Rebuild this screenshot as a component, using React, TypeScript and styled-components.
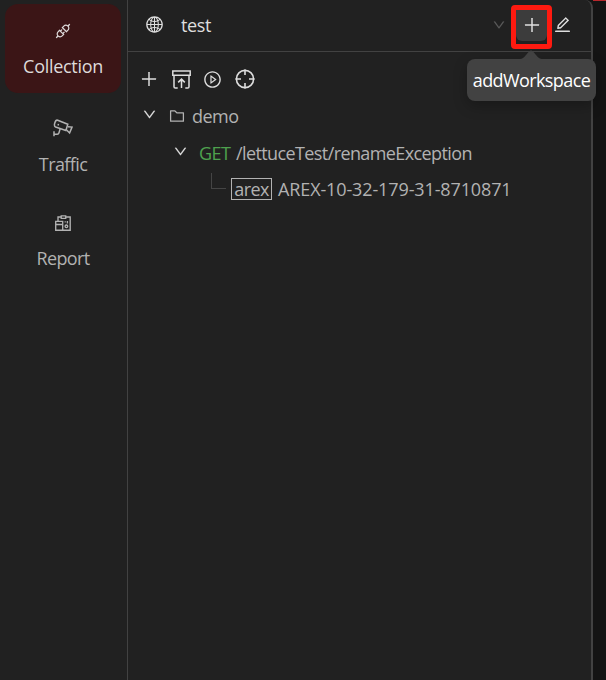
import React from 'react';
import styled, { createGlobalStyle } from 'styled-components';
import {
  AiOutlineApi,
  AiOutlineDown,
  AiOutlineEdit,
  AiOutlineFolder,
  AiOutlineGlobal,
  AiOutlinePlayCircle,
  AiOutlinePlus,
} from 'react-icons/ai';

const GlobalStyle = createGlobalStyle`
  * { box-sizing: border-box; }
  body {
    margin: 0;
    background: #141414;
    color: #b2b2b2;
    font: 18px/26px "Open Sans", "Noto Sans", sans-serif;
    overflow: hidden;
  }
  svg { display: block; flex: none; }
`;

const Page = styled.div`
  display: flex;
  width: 606px;
  height: 680px;
  background: #141414;
`;

const Sidebar = styled.nav`
  width: 128px;
  padding: 4px 6px 0 5px;
  border-right: 1px solid #424242;
  background: #212121;
`;

const NavItem = styled.div<{ $active?: boolean; $height: number; $top: number; $gap: number }>`
  display: flex;
  flex-direction: column;
  align-items: center;
  height: ${(p) => p.$height}px;
  padding-top: ${(p) => p.$top}px;
  gap: ${(p) => p.$gap}px;
  border-radius: 13px;
  background: ${(p) => (p.$active ? '#3b1516' : 'transparent')};
  color: ${(p) => (p.$active ? '#dedada' : '#b2b2b2')};
`;

const NavIcon = styled.span`
  display: flex;
  align-items: center;
  justify-content: center;
  height: 20px;
`;

const Label = styled.span<{ $spacing?: number }>`
  white-space: nowrap;
  letter-spacing: ${(p) => p.$spacing ?? -0.6}px;
`;

const Panel = styled.main`
  width: 465px;
  border-right: 2px solid #424242;
  border-top-right-radius: 8px;
  background: #212121;
`;

const Header = styled.header`
  display: flex;
  align-items: center;
  height: 52px;
  padding: 0 19px 2px 17px;
  border-bottom: 1px solid #424242;
  color: #dedede;
`;

const WorkspaceName = styled.div`
  flex: 1;
  padding-left: 17px;
`;

const Chevron = styled(AiOutlineDown)<{ $dim?: boolean }>`
  color: ${(p) => (p.$dim ? '#5c5c5c' : '#dedede')};
  stroke: currentColor;
  stroke-width: 12px;
`;

const AddArea = styled.div`
  position: relative;
  margin: 0 1px 0 5px;
`;

const AddFrame = styled.div`
  display: flex;
  align-items: center;
  justify-content: center;
  width: 41px;
  height: 44px;
  margin-top: 4px;
  padding-bottom: 3px;
  border: 5px solid #fe1a10;
  border-radius: 4px;
`;

const AddButton = styled.button`
  display: flex;
  align-items: center;
  justify-content: center;
  width: 31px;
  height: 31px;
  padding: 0;
  border: 0;
  border-radius: 0 0 6px 6px;
  background: #3c3c3c;
  color: #e0e0e0;
`;

const Tooltip = styled.div`
  position: absolute;
  z-index: 1;
  top: 58px;
  left: -44px;
  width: 129px;
  height: 42px;
  border-radius: 8px;
  background: #424242;
  color: #fff;
  line-height: 43px;
  text-align: center;
  box-shadow: 0 5px 14px rgba(0, 0, 0, 0.25);
`;

const Arrow = styled.svg`
  position: absolute;
  top: -9px;
  left: 53px;
`;

const Toolbar = styled.div`
  display: flex;
  align-items: center;
  gap: 12.5px;
  height: 53px;
  padding: 1px 0 0 11px;
  color: #dedede;
`;

const TreeRow = styled.div<{ $indent: number; $height: number }>`
  display: flex;
  align-items: center;
  height: ${(p) => p.$height}px;
  padding-left: ${(p) => p.$indent}px;
`;

const Twisty = styled.span<{ $gap: number }>`
  width: 15px;
  height: 18px;
  margin-right: ${(p) => p.$gap}px;
`;

const FolderIcon = styled(AiOutlineFolder)`
  margin-right: 6px;
`;

const Method = styled.div`
  width: 37px;
  color: #4ea14e;
`;

const Branch = styled.span`
  width: 15px;
  height: 16px;
  margin: 0 5px 17px 0;
  border: solid #454545;
  border-width: 0 0 1px 1px;
`;

const Tag = styled.span`
  display: flex;
  align-items: center;
  justify-content: center;
  width: 41px;
  height: 22px;
  margin-right: 6px;
  padding-bottom: 1px;
  border: 1px solid #b2b2b2;
`;

const CaseName = styled.div`
  padding-bottom: 1px;
`;

const CornerStrip = styled.div`
  flex: 1;
  height: 1px;
  background: #b7272c;
`;

const CameraIcon = () => (
  <svg width="20" height="18" viewBox="0 0 20 18" fill="none" stroke="currentColor" strokeWidth="1.5">
    <path d="M4.7 1.2 14.8 5.3 12.9 11.5 2.6 8C.2 6.9 2.1.5 4.7 1.2Z" />
    <path d="m15 7.7 4 .4-2.4 5.9-3-3M1 12.2v5M1.2 15.2h3q1.4 0 1.8-1.5l1.1-3.8" />
    <path d="M5.3 4.9v1.6" />
  </svg>
);

const ReportIcon = () => (
  <svg width="16" height="16" viewBox="0 0 16 16" fill="none" stroke="currentColor" strokeWidth="1.35">
    <path d="M3 6V2h3m5 0h4.2v13.2H.7V6.3h7v8.9M.7 9.5h7" />
    <path d="M6.2.9h4.5v2.4H6.2ZM9.6 6.8h1.2m1.6-.8v2.4" />
    <circle cx="11.4" cy="11.3" r="1.3" />
  </svg>
);

const ArchiveIcon = () => (
  <svg width="19" height="19" viewBox="0 0 19 19" fill="none" stroke="currentColor" strokeWidth="1.5">
    <path d="M.8 1h17.4v4.2H.8ZM2 5.5v11.2q0 1.3 1.3 1.3h2.4M17 5.5v11.2q0 1.3-1.3 1.3h-2.4" />
    <path d="M9.5 18V9.2M6.2 12.4l3.3-3.3 3.3 3.3" />
  </svg>
);

const CrosshairIcon = () => (
  <svg width="20" height="20" viewBox="0 0 20 20" fill="none" stroke="currentColor" strokeWidth="1.6">
    <circle cx="10" cy="10" r="8.6" />
    <path d="M10 .5V6M10 14v5.5M.5 10H6M14 10h5.5" />
  </svg>
);

export default function App() {
  return (
    <>
      <GlobalStyle />
      <Page>
        <Sidebar>
          <NavItem $active $height={89} $top={17} $gap={12}>
            <NavIcon><AiOutlineApi size={18} /></NavIcon>
            <Label $spacing={-0.3}>Collection</Label>
          </NavItem>
          <NavItem $height={103} $top={25} $gap={13}>
            <NavIcon><CameraIcon /></NavIcon>
            <Label>Traffic</Label>
          </NavItem>
          <NavItem $height={90} $top={17} $gap={12}>
            <NavIcon><ReportIcon /></NavIcon>
            <Label>Report</Label>
          </NavItem>
        </Sidebar>
        <Panel>
          <Header>
            <AiOutlineGlobal size={19} />
            <WorkspaceName><Label $spacing={-0.4}>test</Label></WorkspaceName>
            <Chevron size={14} $dim />
            <AddArea>
              <AddFrame>
                <AddButton aria-label="addWorkspace"><AiOutlinePlus size={20} /></AddButton>
              </AddFrame>
              <Tooltip>
                <Arrow width="22" height="9" viewBox="0 0 22 9" fill="#424242">
                  <path d="M0 9Q3 9 6 5L9 1.5q2-2 4 0L16 5q3 4 6 4Z" />
                </Arrow>
                <Label>addWorkspace</Label>
              </Tooltip>
            </AddArea>
            <AiOutlineEdit size={19} />
          </Header>
          <Toolbar>
            <AiOutlinePlus size={20} />
            <ArchiveIcon />
            <AiOutlinePlayCircle size={19} />
            <CrosshairIcon />
          </Toolbar>
          <TreeRow $indent={14} $height={22}>
            <Twisty $gap={11}><Chevron size={15} /></Twisty>
            <FolderIcon size={18} />
            <Label $spacing={-0.5}>demo</Label>
          </TreeRow>
          <TreeRow $indent={45} $height={51}>
            <Twisty $gap={11}><Chevron size={15} /></Twisty>
            <Method><Label>GET</Label></Method>
            <Label>/lettuceTest/renameException</Label>
          </TreeRow>
          <TreeRow $indent={83} $height={22}>
            <Branch />
            <Tag><Label>arex</Label></Tag>
            <CaseName><Label $spacing={-0.12}>AREX-10-32-179-31-8710871</Label></CaseName>
          </TreeRow>
        </Panel>
        <CornerStrip />
      </Page>
    </>
  );
}
